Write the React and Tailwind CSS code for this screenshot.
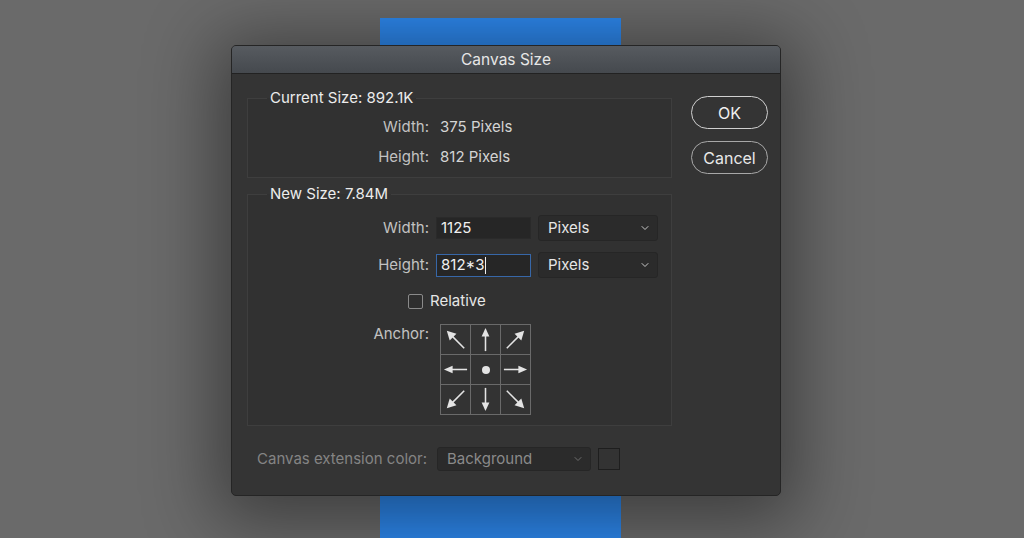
import { ChevronDown } from "lucide-react";

const font = { fontFamily: "Inter, 'Liberation Sans', sans-serif" };

function Arrow({ angle }) {
    // straight arrow pointing up, rotated around the cell centre
    return (
        <svg width="29" height="29" viewBox="0 0 30 30">
            <g transform={`rotate(${angle} 15 15)`}>
                <line x1="15" y1="27" x2="15" y2="10" stroke="#e4e4e4" strokeWidth="1.6" />
                <polygon points="15,3 11,12 19,12" fill="#e4e4e4" />
            </g>
        </svg>
    );
}

function DiagArrow({ angle }) {
    return (
        <svg width="29" height="29" viewBox="0 0 30 30">
            <g transform={`rotate(${angle} 15 15)`}>
                <line x1="24" y1="24" x2="11" y2="11" stroke="#e4e4e4" strokeWidth="1.6" />
                <polygon points="6,6 16,9 9,16" fill="#e4e4e4" />
            </g>
        </svg>
    );
}

function Select({ value, width, dim }) {
    return (
        <div
            className={`flex items-center justify-between rounded-[3px] border border-[#262626] bg-[#2b2b2b] pl-[9px] pr-[6px] ${width} ${dim ? "h-[24px] text-[#8a8a8a]" : "h-[26px] text-[#e6e6e6]"}`}
        >
            <span>{value}</span>
            <ChevronDown size={12} strokeWidth={2} className={dim ? "text-[#6d6d6d]" : "text-[#c8c8c8]"} />
        </div>
    );
}

export default function App() {
    const cells = [
        <DiagArrow key="nw" angle={0} />,
        <Arrow key="n" angle={0} />,
        <DiagArrow key="ne" angle={90} />,
        <Arrow key="w" angle={-90} />,
        <div key="c" className="h-[8px] w-[8px] rounded-full bg-[#e4e4e4]" />,
        <Arrow key="e" angle={90} />,
        <DiagArrow key="sw" angle={-90} />,
        <Arrow key="s" angle={180} />,
        <DiagArrow key="se" angle={180} />,
    ];

    return (
        <div className="relative h-[538px] w-[1024px] overflow-hidden bg-[#6a6a6a] text-[15px]" style={font}>
            {/* document canvas behind the dialog */}
            <div className="ml-[380px] mt-[18px] h-[520px] w-[241px] bg-[#2d88ee]" />

            {/* Canvas Size dialog */}
            <div className="absolute left-[231px] top-[45px] flex h-[451px] w-[550px] flex-col overflow-hidden rounded-[5px] border border-[#252525] bg-[#343434] shadow-[0_10px_70px_16px_rgba(0,0,0,0.42)]">
                <div className="flex h-[28px] items-center justify-center border-b border-[#222] bg-gradient-to-b from-[#575b60] to-[#45494e] pt-px text-[15.5px] text-[#e6e6e6]">
                    Canvas Size
                </div>

                <div className="flex pl-[15px]">
                    <div className="flex w-[425px] shrink-0 flex-col">
                        {/* current size */}
                        <fieldset className="mt-[14px] h-[90px] border border-[#3e3e3e] bg-[#313131]">
                            <legend className="ml-[19px] px-[3px] leading-[20px] text-[#ececec]">Current Size: 892.1K</legend>
                            <div className="mt-[9px] flex h-[20px] items-center">
                                <span className="w-[181px] text-right text-[#c2c2c2]">Width:</span>
                                <span className="ml-[11px] text-[#d4d4d4]">375 Pixels</span>
                            </div>
                            <div className="mt-[10px] flex h-[20px] items-center">
                                <span className="w-[181px] text-right text-[#c2c2c2]">Height:</span>
                                <span className="ml-[11px] text-[#d4d4d4]">812 Pixels</span>
                            </div>
                        </fieldset>

                        {/* new size */}
                        <fieldset className="mt-[6px] h-[242px] border border-[#3e3e3e] bg-[#313131]">
                            <legend className="ml-[19px] px-[3px] leading-[20px] text-[#ececec]">New Size: 7.84M</legend>
                            <div className="mt-[11px] flex h-[26px] items-center">
                                <span className="w-[181px] text-right text-[#c2c2c2]">Width:</span>
                                <div className="ml-[7px] flex h-[22px] w-[95px] items-center border border-[#2a2a2a] bg-[#262626] pl-[4px] text-[#f0f0f0]">
                                    1125
                                </div>
                                <div className="ml-[7px]">
                                    <Select value="Pixels" width="w-[120px]" />
                                </div>
                            </div>
                            <div className="mt-[11px] flex h-[26px] items-center">
                                <span className="w-[181px] text-right text-[#c2c2c2]">Height:</span>
                                <div className="ml-[7px] flex h-[23px] w-[95px] items-center border border-[#3767a8] bg-[#262626] pl-[4px] text-[#f0f0f0]">
                                    812*3
                                    <span className="ml-px h-[17px] w-px bg-[#f0f0f0]" />
                                </div>
                                <div className="ml-[7px]">
                                    <Select value="Pixels" width="w-[120px]" />
                                </div>
                            </div>
                            <div className="mt-[15px] flex h-[16px] items-center">
                                <span className="ml-[160px] h-[15px] w-[15px] rounded-[2px] border border-[#8a8a8a] bg-[#2e2e2e]" />
                                <span className="ml-[7px] text-[#e6e6e6]">Relative</span>
                            </div>
                            <div className="mt-[15px] flex items-start">
                                <span className="w-[181px] text-right leading-[20px] text-[#c2c2c2]">Anchor:</span>
                                <div className="ml-[11px] grid grid-cols-[repeat(3,29px)] grid-rows-[repeat(3,29px)] gap-px border border-[#6a6a6a] bg-[#6a6a6a]">
                                    {cells.map((c, i) => (
                                        <div key={i} className="flex items-center justify-center bg-[#333]">
                                            {c}
                                        </div>
                                    ))}
                                </div>
                            </div>
                        </fieldset>
                    </div>

                    {/* buttons */}
                    <div className="ml-[19px] mt-[22px] flex shrink-0 flex-col gap-[12px]">
                        <button className="h-[33px] w-[77px] rounded-full border-[1.5px] border-[#d0d0d0] text-[16px] text-[#f0f0f0]">
                            OK
                        </button>
                        <button className="h-[33px] w-[77px] rounded-full border-[1.5px] border-[#a8a8a8] text-[16px] text-[#e8e8e8]">
                            Cancel
                        </button>
                    </div>
                </div>

                {/* canvas extension colour */}
                <div className="mt-[21px] flex h-[24px] items-center pl-[25px]">
                    <span className="w-[180px] text-[#848484]">Canvas extension color:</span>
                    <Select value="Background" width="w-[154px]" dim />
                    <span className="ml-[7px] h-[22px] w-[22px] border border-[#1e1e1e] bg-[#333]" />
                </div>
            </div>
        </div>
    );
}
